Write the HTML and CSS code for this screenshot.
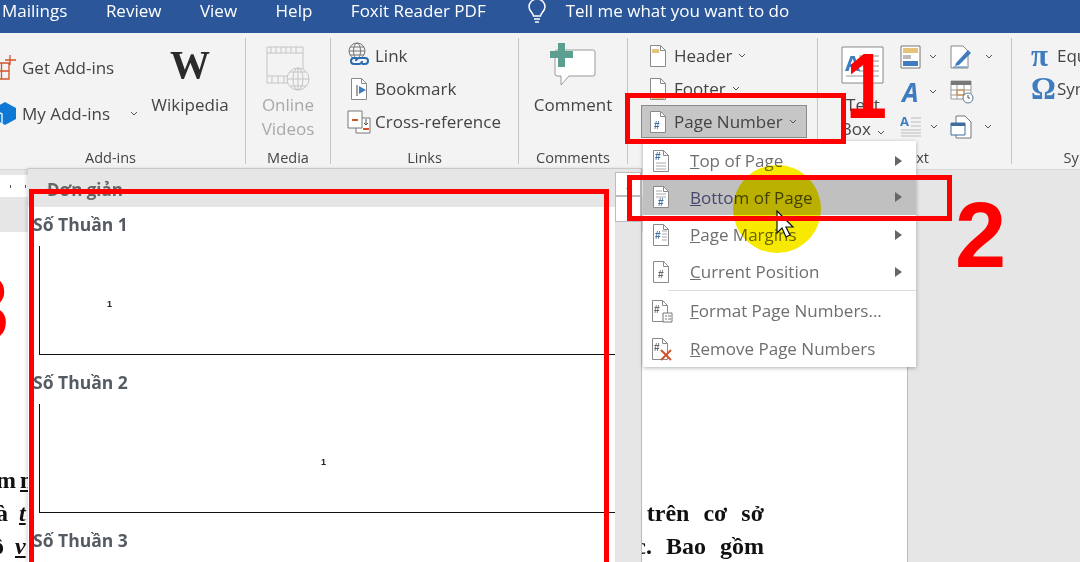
FILE: index.html
```html
<!DOCTYPE html>
<html lang="en">
<head>
  <meta charset="UTF-8" />
  <title>Page Number menu</title>
  <link rel="stylesheet" href="styles.css">
</head>
<body>
  <svg class="defs" width="0" height="0">
    <symbol id="sheet" viewBox="0 0 18 24">
      <path d="M1.5 1.5h10l5 5v16h-15z" fill="#fff" stroke="#8a8a8a"/>
      <path d="M11.5 1.5v5h5" fill="none" stroke="#8a8a8a"/>
    </symbol>
  </svg>

  <nav class="tabs">
    <span class="tab">Mailings</span>
    <span class="tab">Review</span>
    <span class="tab">View</span>
    <span class="tab">Help</span>
    <span class="tab">Foxit Reader PDF</span>
    <svg class="bulb" width="20" height="24" viewBox="0 0 20 24" fill="none" stroke="#fff" stroke-width="1.5">
      <path d="M6.5 17c0-3-4.500-5-4.500-9a8 8 0 0 1 16 0c0 4-4.500 6-4.500 9z"/>
      <path d="M7 20h6M8 23h4"/>
    </svg>
    <span class="tell">Tell me what you want to do</span>
  </nav>

  <section class="ribbon">
    <div class="group addins">
      <div class="group-body">
        <div class="addin-rows">
          <div class="row">
            <svg class="bleed" width="24" height="25" viewBox="0 0 24 25" fill="none" stroke="#d2542a" stroke-width="1.3">
              <path d="M1 8h15v16H1zM1 16h15M8.500 8v16M17 0v10M12 5h11"/>
            </svg>
            <span>Get Add-ins</span>
          </div>
          <div class="row">
            <svg class="bleed" width="24" height="25" viewBox="0 0 24 25">
              <path d="M12 1l11 6v11l-11 6-11-6V7z" fill="#0f78d4"/>
              <path d="M1 9l8 4v10" fill="none" stroke="#fff" stroke-width="1.300"/>
            </svg>
            <span>My Add-ins</span>
            <svg class="chev wide" viewBox="0 0 8 5"><path d="M1 1l3 3 3-3"/></svg>
          </div>
        </div>
        <div class="big wiki">
          <span class="big-icon wiki-logo">W</span>
          <span>Wikipedia</span>
        </div>
      </div>
      <div class="group-label">Add-ins</div>
    </div>

    <div class="group media">
      <div class="group-body">
        <div class="big muted">
          <span class="big-icon">
            <svg width="44" height="46" viewBox="0 0 44 46" fill="none" stroke="#c4c4c4">
              <path d="M1 1h36v36H1zM1 7h36M1 30h24"/>
              <path d="M5 1v6M10 1v6M15 1v6M20 1v6M25 1v6M30 1v6M6 30v7M12 30v7M18 30v7"/>
              <circle cx="32" cy="33" r="11" fill="#f3f3f3"/>
              <path d="M21 33h22M32 22v22M24 26h16M24 40h16"/>
              <ellipse cx="32" cy="33" rx="5" ry="11"/>
            </svg>
          </span>
          <span>Online</span>
          <span>Videos</span>
        </div>
      </div>
      <div class="group-label">Media</div>
    </div>

    <div class="group links">
      <div class="group-body rows">
        <div class="row">
          <svg width="22" height="26" viewBox="0 0 22 26" fill="none" stroke="#777">
            <circle cx="9" cy="9" r="8"/>
            <ellipse cx="9" cy="9" rx="3.500" ry="8"/>
            <path d="M1 9h16M2 5h14M2 13h14"/>
            <path d="M8 19a3 3 0 0 1 3-3h4M14 19a3 3 0 0 1-3 3H8M14 16h3a3 3 0 0 1 0 6h-3M8 22H6a3 3 0 0 1 0-6h3" stroke="#2b6cb0" stroke-width="2"/>
          </svg>
          <span>Link</span>
        </div>
        <div class="row">
          <svg width="22" height="24" viewBox="0 0 18 24">
            <use href="#sheet"/>
            <path d="M7 8v11" stroke="#444"/>
            <path d="M9 9l7 4-7 4z" fill="#3f7cbf"/>
          </svg>
          <span>Bookmark</span>
        </div>
        <div class="row">
          <svg class="xref-icon" width="24" height="24" viewBox="0 0 24 24" fill="#fff" stroke="#777">
            <path d="M9 8h14v15H9z"/>
            <path d="M1 1h14v17H1z"/>
            <path d="M5 10h6" stroke="#d2542a" stroke-width="2"/>
            <path d="M19 9v6M17 13l2 2 2-2" fill="none" stroke="#555"/>
            <path d="M16 19h6" stroke="#d2542a" stroke-width="2"/>
          </svg>
          <span>Cross-reference</span>
        </div>
      </div>
      <div class="group-label">Links</div>
    </div>

    <div class="group comments">
      <div class="group-body">
        <div class="big">
          <span class="big-icon">
            <svg class="comment-icon" width="46" height="46" viewBox="0 0 46 46">
              <path d="M7 8h36a2 2 0 0 1 2 2v22a2 2 0 0 1-2 2H19l-8 9v-9H7a2 2 0 0 1-2-2V10a2 2 0 0 1 2-2z" fill="#fff" stroke="#999"/>
              <path d="M0 9h8V1h7v8h8v7h-8v9H8v-9H0z" fill="#5c9e8f"/>
            </svg>
          </span>
          <span>Comment</span>
        </div>
      </div>
      <div class="group-label">Comments</div>
    </div>

    <div class="group headfoot">
      <div class="group-body rows">
        <div class="row">
          <svg width="18" height="24" viewBox="0 0 18 24">
            <use href="#sheet"/>
            <path d="M3 5h7v4H3z" fill="#e6c27a"/>
          </svg>
          <span>Header</span>
          <svg class="chev" viewBox="0 0 8 5"><path d="M1 1l3 3 3-3"/></svg>
        </div>
        <div class="row">
          <svg width="18" height="24" viewBox="0 0 18 24">
            <use href="#sheet"/>
            <path d="M3 18h12v4H3z" fill="#e6c27a"/>
          </svg>
          <span>Footer</span>
          <svg class="chev" viewBox="0 0 8 5"><path d="M1 1l3 3 3-3"/></svg>
        </div>
        <div class="row pressed">
          <svg width="18" height="24" viewBox="0 0 18 24">
            <use href="#sheet"/>
            <text x="5" y="19" class="hash">#</text>
          </svg>
          <span>Page Number</span>
          <svg class="chev" viewBox="0 0 8 5"><path d="M1 1l3 3 3-3"/></svg>
        </div>
      </div>
      <div class="group-label">Header &amp; Footer</div>
    </div>

    <div class="group textgroup">
      <div class="group-body">
        <div class="big textbox">
          <span class="big-icon">
            <svg width="44" height="38" viewBox="0 0 44 38" fill="#fff" stroke="#888">
              <path d="M1 1h41v36H1z"/>
              <path d="M18 10h20M18 15h20M18 20h20M18 25h20M5 30h33" stroke="#bbb" stroke-width="1.500"/>
              <text x="4" y="25" class="textbox-a">A</text>
            </svg>
          </span>
          <span>Text</span>
          <span class="box-line">Box
            <svg class="chev" viewBox="0 0 8 5"><path d="M1 1l3 3 3-3"/></svg>
          </span>
        </div>
        <div class="tools">
          <div class="tool">
            <svg width="21" height="24" viewBox="0 0 21 24" fill="none" stroke="#777">
              <path d="M1 1h19v22H1z" fill="#fff"/>
              <path d="M3 3h15v5H3z" fill="#e6c27a" stroke="none"/>
              <path d="M3 10h8v4H3z" fill="#bbb" stroke="none"/>
              <path d="M3 16h15v5H3z" fill="#3f7cbf" stroke="none"/>
            </svg>
            <svg class="chev" viewBox="0 0 8 5"><path d="M1 1l3 3 3-3"/></svg>
          </div>
          <div class="tool">
            <svg width="23" height="24" viewBox="0 0 23 24">
              <path d="M1 1h12l5 5v17H1z" fill="#fff" stroke="#888"/>
              <path d="M6 18L18 5l3 3L9 20l-4 1z" fill="#3f7cbf"/>
              <path d="M3 22h14" stroke="#3f7cbf"/>
            </svg>
            <svg class="chev" viewBox="0 0 8 5"><path d="M1 1l3 3 3-3"/></svg>
          </div>
          <div class="tool">
            <span class="wordart">A</span>
            <svg class="chev" viewBox="0 0 8 5"><path d="M1 1l3 3 3-3"/></svg>
          </div>
          <div class="tool">
            <svg width="24" height="24" viewBox="0 0 24 24" fill="none" stroke="#999">
              <path d="M1 1h20v18H1z" fill="#fff"/>
              <path d="M1 1h20v4H1z" fill="#777" stroke="none"/>
              <path d="M1 10h20M1 15h20M7 5v14M14 5v14"/>
              <path d="M7 10h7v5H7z" stroke="#d2842a"/>
              <circle cx="18" cy="18" r="5" fill="#fff" stroke="#5a7a99"/>
              <path d="M18 15v3h2" stroke="#555"/>
            </svg>
          </div>
          <div class="tool">
            <svg width="22" height="24" viewBox="0 0 22 24" fill="none" stroke="#bbb">
              <text x="0" y="11" class="dropcap">A</text>
              <path d="M11 3h10M11 7h10M11 11h10M1 15h20M1 18h20M1 21h20"/>
            </svg>
            <svg class="chev" viewBox="0 0 8 5"><path d="M1 1l3 3 3-3"/></svg>
          </div>
          <div class="tool">
            <svg width="22" height="24" viewBox="0 0 22 24" fill="none" stroke="#777">
              <path d="M6 1h9l6 6v16H6z" fill="#fff"/>
              <path d="M1 8h14v12H1z" fill="#fff" stroke="#3f6d9e"/>
              <path d="M1 8h14v3H1z" fill="#3f6d9e" stroke="none"/>
            </svg>
            <svg class="chev" viewBox="0 0 8 5"><path d="M1 1l3 3 3-3"/></svg>
          </div>
        </div>
      </div>
      <div class="group-label">Text</div>
    </div>

    <div class="group symbols">
      <div class="group-body rows">
        <div class="row"><span class="sym">&pi;</span><span>Equation</span></div>
        <div class="row"><span class="sym">&Omega;</span><span>Symbol</span></div>
      </div>
      <div class="group-label">Symbols</div>
    </div>
  </section>

  <main class="workspace">
    <div class="ruler"></div>
    <div class="page">
      <div class="page-line line-one"><span>m <span class="spell">n</span></span><span></span></div>
      <div class="page-line line-two"><span>à <em>t</em></span><span>ạ trên cơ sở</span></div>
      <div class="page-line line-three"><span>ộ <em>v</em></span><span>ọc. Bao gồm</span></div>
    </div>
  </main>

  <!-- gallery flyout -->
  <aside class="gallery">
    <div class="gallery-list">
      <div class="gallery-head">Đơn giản</div>
      <div class="gallery-item">
        <h4>Số Thuần 1</h4>
        <div class="preview num-left">1</div>
      </div>
      <div class="gallery-item">
        <h4>Số Thuần 2</h4>
        <div class="preview num-center">1</div>
      </div>
      <div class="gallery-item">
        <h4>Số Thuần 3</h4>
      </div>
    </div>
    <div class="gallery-scroll">
      <div class="scroll-btn">
        <span class="scroll-up"><i></i></span>
        <span class="scroll-down"></span>
      </div>
    </div>
  </aside>

  <!-- page number dropdown -->
  <div class="menu">
    <div class="menu-item">
      <svg width="20" height="24" viewBox="0 0 18 24">
        <use href="#sheet"/>
        <text x="3" y="11" class="hash">#</text>
        <path d="M4 14h10M4 17h10M4 20h10" stroke="#aaa"/>
      </svg>
      <span><u>T</u>op of Page</span>
      <i class="arrow"></i>
    </div>
    <div class="menu-item active">
      <svg width="20" height="24" viewBox="0 0 18 24">
        <use href="#sheet"/>
        <path d="M4 6h6M4 9h10M4 12h10" stroke="#aaa"/>
        <text x="6" y="21" class="hash">#</text>
      </svg>
      <span><u>B</u>ottom of Page</span>
      <i class="arrow"></i>
    </div>
    <div class="menu-item">
      <svg width="20" height="24" viewBox="0 0 18 24">
        <use href="#sheet"/>
        <text x="3" y="16" class="hash">#</text>
        <path d="M10 8h5M10 11h5M10 14h5M10 17h5" stroke="#aaa"/>
      </svg>
      <span><u>P</u>age Margins</span>
      <i class="arrow"></i>
    </div>
    <div class="menu-item">
      <svg width="20" height="24" viewBox="0 0 18 24">
        <use href="#sheet"/>
        <text x="6" y="18" class="hash grey">#</text>
      </svg>
      <span><u>C</u>urrent Position</span>
      <i class="arrow"></i>
    </div>
    <div class="menu-sep"></div>
    <div class="menu-item tall">
      <svg width="22" height="24" viewBox="0 0 22 24">
        <use href="#sheet" width="18" height="24"/>
        <text x="3" y="14" class="hash grey">#</text>
        <path d="M12 14h9v9h-9z" fill="#fff" stroke="#777"/>
        <path d="M14 17h2M17 17h3M14 20h2M17 20h3" stroke="#777"/>
      </svg>
      <span><u>F</u>ormat Page Numbers...</span>
    </div>
    <div class="menu-item">
      <svg width="22" height="24" viewBox="0 0 22 24">
        <use href="#sheet" width="18" height="24"/>
        <text x="3" y="14" class="hash grey">#</text>
        <path d="M10 13l10 10M20 13L10 23" stroke="#d2542a" stroke-width="2"/>
      </svg>
      <span><u>R</u>emove Page Numbers</span>
    </div>
  </div>

  <!-- screen recording marks -->
  <div class="spot"></div>
  <svg class="pointer" width="20" height="28" viewBox="0 0 20 28">
    <path d="M1 1v22l5-5 4 9 4-2-4-8h7z" fill="#fff" stroke="#111" stroke-width="1.200"/>
  </svg>
  <div class="mark mark-one"></div>
  <div class="mark mark-two"></div>
  <div class="mark mark-three"></div>
  <span class="digit digit-one">1</span>
  <span class="digit digit-two">2</span>
  <span class="digit digit-three">3</span>
</body>
</html>
```
FILE: styles.css
```css
* {
  box-sizing: border-box;
}
html, body {
  height: 100%;
}
body {
  margin: 0;
  width: 1080px;
  height: 562px;
  overflow: hidden;
  display: flex;
  flex-direction: column;
  position: relative;
  font-family: 'Open Sans', 'Noto Sans', sans-serif;
  font-size: 17px;
  color: #444;
  background: #e6e6e6;
}
.defs {
  position: absolute;
}

/* title tabs */
.tabs {
  flex: none;
  height: 33px;
  display: flex;
  align-items: center;
  padding: 0 0 12px 2px;
  background: #2b579a;
  color: #fff;
  white-space: nowrap;
}
.tab {
  margin-right: 38.5px;
}
.bulb {
  margin: 0 19px 0 2.5px;
}

/* ribbon */
.ribbon {
  flex: none;
  height: 137px;
  display: flex;
  padding: 5px 0 6px;
  background: #f3f3f3;
  border-bottom: 1px solid #d8d8d8;
  white-space: nowrap;
}
.group {
  flex: none;
  height: 126px;
  display: flex;
  flex-direction: column;
  border-right: 1px solid #c6c6c6;
}
.group-body {
  flex: 1;
  display: flex;
  min-height: 0;
}
.group-label {
  flex: none;
  height: 16px;
  line-height: 20px;
  font-size: 14.5px;
  text-align: center;
}
.addins { width: 246px; }
.addins .group-label { padding-right: 24px; }
.media { width: 85px; }
.links { width: 188px; }
.comments { width: 109px; }
.headfoot { width: 190px; }
.textgroup { width: 194px; }
.symbols { width: 160px; border-right: none; }

.rows {
  flex-direction: column;
  padding-top: 1px;
}
.row {
  height: 33px;
  display: flex;
  align-items: center;
}
.links .group-body {
  padding-left: 17px;
}
.links .row svg {
  margin-right: 5px;
  flex: none;
}
.links .row:first-child svg {
  margin-top: -2px;
}
.links .row .xref-icon {
  margin: 0 4px 0 -1px;
}
.headfoot .rows {
  padding-left: 13px;
}
.headfoot .row {
  width: 166px;
  padding-left: 7px;
  border: 1px solid transparent;
}
.headfoot .row > svg:first-child {
  margin-right: 7px;
}
.pressed {
  background: #c6c6c6;
  border-color: #8a8a8a !important;
}
.hash {
  font: bold 10px 'Liberation Sans', sans-serif;
  fill: #3f6d9e;
}
.hash.grey {
  fill: #666;
}
.chev {
  width: 8px;
  height: 5px;
  margin-left: 6px;
  flex: none;
  fill: none;
  stroke: #555;
}
.chev.wide {
  margin-left: 15px;
}

/* add-ins */
.addin-rows {
  width: 146px;
  display: flex;
  flex-direction: column;
  gap: 12px;
  padding-top: 12px;
}
.addin-rows .row {
  height: 34px;
  gap: 5px;
}
.bleed {
  margin-left: -7px;
  flex: none;
}

/* large buttons */
.big {
  display: flex;
  flex-direction: column;
  align-items: center;
  padding-top: 8px;
  line-height: 24px;
}
.big-icon {
  height: 47px;
  display: flex;
  align-items: flex-start;
  justify-content: center;
}
.wiki {
  margin-left: 5px;
  width: 78px;
}
.wiki-logo {
  font: bold 40px/38px 'Liberation Serif', serif;
  color: #2a2a2a;
}
.media .big {
  width: 84px;
}
.muted {
  color: #a9a9a9;
}
.comments .big {
  width: 108px;
}
.comment-icon {
  margin-top: -4px;
}
.textbox {
  width: 60px;
  margin-left: 15px;
}
.box-line .chev {
  margin-left: 2px;
}
.textbox-a {
  font: bold 22px 'Open Sans', sans-serif;
  fill: #3f7cbf;
  stroke: none;
}
.tools {
  display: grid;
  grid-template-columns: 50px 50px;
  grid-auto-rows: 35px;
  margin: 1px 0 0 7px;
}
.tool {
  display: flex;
  align-items: center;
}
.tool .chev {
  margin-left: 8px;
}
.tool:nth-child(even) .chev {
  margin-left: 12px;
}
.wordart {
  width: 21px;
  font: italic bold 26px 'Open Sans', sans-serif;
  color: #3f7cbf;
  text-align: center;
}
.dropcap {
  font: bold 13px 'Open Sans', sans-serif;
  fill: #3f7cbf;
  stroke: none;
}
.symbols .rows {
  padding-left: 19px;
}
.sym {
  width: 26px;
  font: bold 31px 'Liberation Serif', serif;
  color: #3f7cbf;
}

/* document */
.workspace {
  flex: 1;
  display: flex;
  flex-direction: column;
  min-height: 0;
}
.ruler {
  flex: none;
  width: 907px;
  height: 22px;
  margin-top: 5px;
  background: repeating-linear-gradient(90deg, transparent 0 10px, #555 10px 11px, transparent 11px 15px) 0 10px / 100% 3px no-repeat #fff;
}
.page {
  flex: 1;
  width: 908px;
  margin-top: 35px;
  padding: 232px 0 0 0;
  background: #fff;
  border-right: 1px solid #bbb;
  font: bold 24px/33px 'Liberation Serif', serif;
  color: #111;
}
.page-line {
  width: 764px;
  display: flex;
  justify-content: space-between;
  word-spacing: 8px;
  white-space: nowrap;
}
.line-one span:first-child {
  margin-left: -4px;
  word-spacing: 2px;
}
.line-two span:first-child {
  margin-left: -4px;
  word-spacing: 5px;
}
.line-three span:first-child {
  margin-left: -8px;
  word-spacing: 5px;
}
.page-line em {
  text-decoration: underline;
}
.spell {
  text-decoration: underline;
}

/* gallery */
.gallery {
  position: absolute;
  left: 28px;
  top: 168px;
  width: 614px;
  height: 394px;
  display: flex;
  background: #e6e6e6;
  border-top: 1px solid #c8c8c8;
  border-right: 1px solid #bbb;
  box-shadow: -2px 0 3px rgba(0, 0, 0, 0.12);
}
.gallery-list {
  width: 587px;
  background: #fff;
  padding-left: 5px;
}
.gallery-head {
  height: 38px;
  margin-left: -5px;
  padding-left: 19px;
  line-height: 41px;
  background: #e6e6e6;
  font-weight: bold;
  font-size: 17px;
  color: #666;
}
.gallery-item {
  height: 158px;
}
.gallery-item h4 {
  margin: 0;
  height: 39px;
  line-height: 34px;
  font-size: 17.5px;
  color: #555b63;
}
.preview {
  width: 576px;
  height: 109px;
  margin-left: 6px;
  border-left: 1px solid #111;
  border-bottom: 1px solid #111;
  font: bold 9px 'Liberation Sans', sans-serif;
  color: #222;
}
.num-left {
  padding: 53px 0 0 67px;
}
.num-center {
  padding: 53px 0 0 281px;
}
.gallery-scroll {
  flex: 1;
  padding-top: 3px;
}
.scroll-btn {
  width: 26px;
  height: 50px;
  display: flex;
  flex-direction: column;
  background: #fff;
  border: 1px solid #bdbdbd;
}
.scroll-up {
  height: 24px;
  padding: 10px 0 0 5px;
  border-bottom: 2px solid #bdbdbd;
}
.scroll-up i {
  display: block;
  width: 0;
  height: 0;
  border-left: 6px solid transparent;
  border-bottom: 6px solid #666;
  margin-left: 5px;
}

/* dropdown */
.menu {
  position: absolute;
  left: 643px;
  top: 141px;
  width: 273px;
  padding-top: 1px;
  background: #fff;
  box-shadow: 0 1px 4px rgba(0, 0, 0, 0.3);
  color: #6f6f6f;
}
.menu-item {
  height: 37px;
  display: flex;
  align-items: center;
  padding-left: 8px;
  position: relative;
}
.menu-item svg {
  flex: none;
}
.menu-item span {
  position: absolute;
  left: 47px;
}
.menu-item.tall {
  height: 39px;
}
.menu-item.active {
  background: #c0c0c0;
  border-bottom: 1px solid #fff;
  color: #46466e;
}
.menu-sep {
  height: 1px;
  margin-left: 25px;
  background: #dcdcdc;
}
.arrow {
  position: absolute;
  right: 14px;
  width: 0;
  height: 0;
  border-top: 5.500px solid transparent;
  border-bottom: 5.500px solid transparent;
  border-left: 7px solid #666;
}

/* recording overlays */
.spot {
  position: absolute;
  left: 733px;
  top: 165px;
  width: 88px;
  height: 88px;
  border-radius: 50%;
  background: #f7ea00;
  mix-blend-mode: multiply;
}
.pointer {
  position: absolute;
  left: 776px;
  top: 210px;
}
.mark {
  position: absolute;
  border: 5px solid #f00;
}
.mark-one {
  left: 625px;
  top: 93px;
  width: 221px;
  height: 51px;
}
.mark-two {
  left: 627px;
  top: 175px;
  width: 325px;
  height: 46px;
}
.mark-three {
  left: 29px;
  top: 189px;
  width: 580px;
  height: 373px;
  border-bottom: none;
}
.digit {
  position: absolute;
  font: bold 92px/92px 'Liberation Sans', sans-serif;
  color: #f00;
}
.digit-one {
  left: 846px;
  top: 40px;
  transform: scaleX(0.8);
  transform-origin: left;
}
.digit-two {
  left: 955px;
  top: 189px;
}
.digit-three {
  left: -42px;
  top: 262px;
}
```
